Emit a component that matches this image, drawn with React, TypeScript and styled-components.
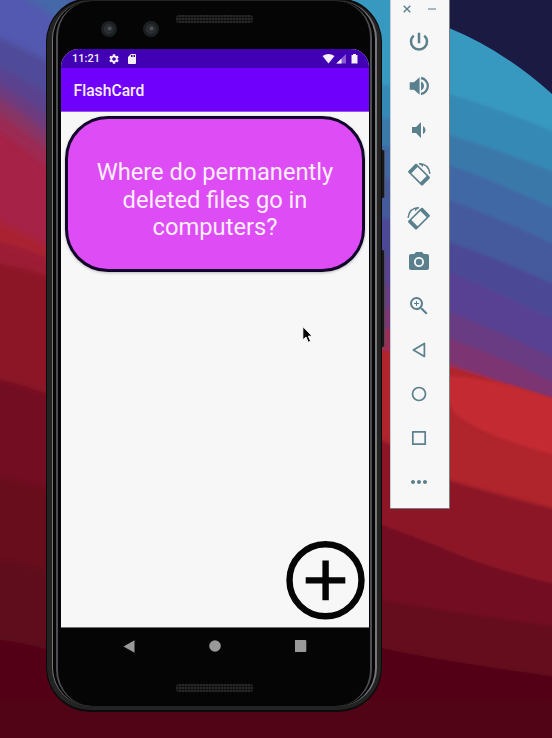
import React from "react";
import styled, { createGlobalStyle } from "styled-components";
import { MdVolumeDown, MdPhotoCamera, MdZoomIn, MdMoreHoriz, MdSettings, MdSdCard } from "react-icons/md";

const GlobalStyle = createGlobalStyle`
  *, *::before, *::after { box-sizing: border-box; }
  body { margin: 0; overflow: hidden; font-family: Roboto, sans-serif; }
  svg { display: block; }
`;

const Desktop = styled.main`
  position: relative;
  display: flex;
  align-items: flex-start;
  width: 552px;
  height: 738px;
  padding-left: 46px;
  overflow: hidden;
  background: #520417;
`;

const WallpaperArt = styled.svg`
  position: absolute;
  inset: 0;
`;

const Phone = styled.section`
  position: relative;
  flex: none;
  width: 336px;
  height: 714px;
  margin-top: -2px;
  padding: 1px 4px 4px 5px;
  border: 1px solid #0b0b0b;
  border-width: 2px 1px;
  border-radius: 44px;
  background: #232323;
`;

const Rim = styled.div`
  height: 100%;
  padding: 0 3px;
  border: solid #77777a;
  border-width: 0 2px 0 1px;
  border-radius: 38px;
  background: #050505;
`;

const Glass = styled.div`
  display: flex;
  flex-direction: column;
  height: 100%;
  padding: 0 2px 0 3px;
  border: solid #4d4e52;
  border-width: 0 2px;
  border-radius: 36px;
  background: #050505;
`;

const SideKey = styled.span<{ $top: number; $height: number }>`
  position: absolute;
  right: -4px;
  top: ${(p) => p.$top}px;
  width: 3px;
  height: ${(p) => p.$height}px;
  border-right: 1px solid #4c4c4c;
  border-radius: 0 2px 2px 0;
  background: #171717;
`;

const Forehead = styled.div`
  flex: none;
  display: flex;
  height: 48px;
  padding: 14px 0 0 40px;
`;

const Lens = styled.span`
  width: 16px;
  height: 16px;
  margin: 6px 26px 0 0;
  border: 3px solid #1b2023;
  border-radius: 50%;
  background: radial-gradient(circle at 55% 45%, #50545a 0 1px, #24282b 3px, #303438 5px);

  & + & {
    margin-right: 17px;
  }
`;

const Speaker = styled.span`
  width: 77px;
  height: 8px;
  border-radius: 3px;
  background:
    repeating-linear-gradient(0deg, transparent 0 2px, #101010 2px 3px),
    repeating-linear-gradient(90deg, #272727 0 2px, #171717 2px 3px);
`;

const Screen = styled.div`
  flex: none;
  display: flex;
  flex-direction: column;
  width: 308px;
  height: 579px;
  border-radius: 18px 18px 0 0;
  overflow: hidden;
  border-bottom: 1px solid #707070;
  background: #f7f7f7;
`;

const StatusBar = styled.div`
  flex: none;
  display: flex;
  align-items: center;
  height: 19px;
  padding: 0 10px 0 11px;
  background: #4200b5;
  color: #f5f0fb;
`;

const Clock = styled.span`
  width: 36px;
  font-size: 11px;
  font-weight: 500;
  line-height: 19px;
`;

const Notices = styled.span`
  display: flex;
  flex: 1;
  align-items: center;
  gap: 6px;
`;

const AppBar = styled.header`
  flex: none;
  height: 44px;
  padding-left: 12.5px;
  border-bottom: 1px solid #9a55f0;
  background: #6f00fb;
  color: #f6effe;
  font-size: 15.7px;
  font-weight: 500;
  line-height: 46px;
`;

const Content = styled.div`
  display: flex;
  flex: 1;
  flex-direction: column;
  justify-content: space-between;
  padding: 4px 4px 7px;
`;

const Card = styled.article`
  display: flex;
  align-items: center;
  justify-content: center;
  height: 156px;
  padding: 13px 20px 0;
  border: 3px solid #12032b;
  border-radius: 43px;
  background: #de4cf5;
  box-shadow: 0 1px 3px rgba(0, 0, 0, 0.25);
  color: #fdeeff;
  font-size: 23.7px;
  line-height: 27.5px;
  text-align: center;
`;

const AddButton = styled.button`
  align-self: flex-end;
  width: 79px;
  height: 79px;
  padding: 0;
  border: 0;
  background: none;
`;

const NavBar = styled.nav`
  flex: none;
  display: flex;
  align-items: center;
  gap: 74px;
  height: 36px;
  padding-left: 62px;
`;

const Chin = styled.div`
  display: flex;
  justify-content: center;
  padding-top: 20px;
`;

const Toolbar = styled.aside`
  position: relative;
  flex: none;
  width: 60px;
  height: 509px;
  margin-left: 8px;
  padding-right: 1px;
  border: solid #777c7c;
  border-width: 0 1px 1px 0;
  background: #f7f7f7;
  box-shadow: inset 1px 0 #c5cbd2;
  color: #5a7f8d;
`;

const WindowControls = styled.div`
  display: flex;
  justify-content: space-between;
  height: 20px;
  padding: 5px 12px 0 13px;
`;

const Tools = styled.div`
  display: flex;
  flex-direction: column;
  align-items: center;
`;

const Tool = styled.span`
  display: flex;
  align-items: center;
  height: 44px;
`;

const Pointer = styled.svg`
  position: absolute;
  left: 300px;
  top: 324px;
`;

const leftBands: [string, number, number][] = [
  ["#4f4b9a", 38, 62],
  ["#5a438f", 68, 94],
  ["#6c3a7e", 84, 116],
  ["#863565", 98, 134],
  ["#9b2c52", 114, 150],
  ["#a62347", 132, 168],
  ["#aa2433", 222, 246],
  ["#9d1c36", 242, 258],
  ["#8c1527", 264, 276],
  ["#721020", 380, 394],
  ["#670c1c", 478, 490],
  ["#5e081a", 560, 572],
  ["#520417", 640, 650],
];

const rightBands: [string, number, number, number][] = [
  ["#3689b5", 85, 94, 132],
  ["#3b78aa", 118, 135, 172],
  ["#4068a4", 146, 165, 210],
  ["#455a9d", 178, 200, 246],
  ["#4c4a96", 218, 242, 285],
  ["#594192", 256, 272, 322],
  ["#683b82", 285, 312, 360],
  ["#7c3472", 308, 338, 384],
];

const Wallpaper = () => (
  <WallpaperArt width="552" height="738" viewBox="0 0 552 738">
    <defs>
      <filter id="soft" filterUnits="userSpaceOnUse" x="-40" y="-40" width="640" height="820">
        <feGaussianBlur stdDeviation="3" />
      </filter>
      <filter id="slight" filterUnits="userSpaceOnUse" x="300" y="-20" width="300" height="820">
        <feGaussianBlur stdDeviation="1.5" />
      </filter>
    </defs>
    <rect width="220" height="738" fill="#5359b0" />
    <g filter="url(#soft)">
      <path d="M10 -10Q42 6 70 30V-10Z" fill="#4467a8" />
      {leftBands.map(([fill, a, b]) => (
        <path key={fill} d={`M-30 ${a - 3}L0 ${a}Q25 ${(a + b) / 2 - 2} 48 ${b}L240 ${b + 20}V770H-30Z`} fill={fill} />
      ))}
    </g>
    <rect x="220" width="332" height="738" fill="#1a1a43" />
    <path d="M200 -5L382 -5Q420 12 449 28Q503 50 552 94V738H200Z" fill="#3899c0" />
    <g filter="url(#slight)">
      {rightBands.map(([fill, a, b, c]) => (
        <path key={fill} d={`M200 ${a - 8}L382 ${a}Q420 ${a + 3} 449 ${b}Q505 ${(b + c) / 2 - 3} 580 ${c + 11}V770H200Z`} fill={fill} />
      ))}
    </g>
    <path d="M200 320L382 328Q420 336 449 363L552 398V738H200Z" fill="#9c2d56" />
    <path d="M200 340L382 350Q420 358 449 367L552 399V738H200Z" fill="#b0242c" />
    <g filter="url(#slight)">
      <path d="M449 376Q500 378 580 408V461Q480 438 453 411Q446 398 449 376Z" fill="#c42c30" />
      <path d="M200 435L382 440Q420 455 449 480Q490 493 580 515V770H200Z" fill="#8c1527" />
      <path d="M200 515L382 525Q410 535 440 547Q490 570 580 590V770H200Z" fill="#721020" />
      <path d="M200 580L382 600Q440 611 580 630V770H200Z" fill="#650c1c" />
      <path d="M200 630L382 648Q440 661 580 680V770H200Z" fill="#520417" />
    </g>
    <path d="M0 700H552V738H0Z" fill="#520417" />
  </WallpaperArt>
);

const PowerIcon = () => (
  <svg width="24" height="24" viewBox="0 0 24 24" fill="none" stroke="currentColor" strokeWidth="2.5">
    <path d="M12 2.7V13.2M6.7 5.6A8 8 0 1 0 17.3 5.6" />
  </svg>
);

const VolumeUpIcon = () => (
  <svg width="24" height="24" viewBox="0 0 24 24">
    <path d="M2.7 8.2H7L12.6 3.3V20.7L7 15.8H2.7Z" fill="currentColor" />
    <path d="M14 7.6C18 9 18 15 14 16.4Z" fill="currentColor" />
    <path d="M14 4A8.1 8.1 0 0 1 14 20" fill="none" stroke="currentColor" strokeWidth="2.3" />
  </svg>
);

const RotateIcon = ({ mirrored = false }: { mirrored?: boolean }) => (
  <svg width="24" height="24" viewBox="0 0 24 24" overflow="visible">
    <g transform={mirrored ? "matrix(-1 0 0 1 24 0)" : undefined}>
      <path
        transform="translate(12 12.7) rotate(45)"
        fill="currentColor"
        fillRule="evenodd"
        d="M-9 -6H9Q10.2 -6 10.2 -4.8V4.8Q10.2 6 9 6H-9Q-10.2 6 -10.2 4.8V-4.8Q-10.2 -6 -9 -6ZM-6.4 -4.4V4.4H6.4V-4.4Z"
      />
      <path d="M12 1.7Q21.8 1.7 22.9 11.8" fill="none" stroke="currentColor" strokeWidth="1.5" />
      <path d="M11.6 1.1L16 1.9V5.3Z" fill="currentColor" />
    </g>
  </svg>
);

const Outline = ({ d }: { d: string }) => (
  <svg width="24" height="24" viewBox="0 0 24 24">
    <path d={d} fill="none" stroke="currentColor" strokeWidth="1.7" strokeLinejoin="round" />
  </svg>
);

const tools: React.ReactNode[] = [
  <PowerIcon />,
  <VolumeUpIcon />,
  <MdVolumeDown size={24} />,
  <RotateIcon />,
  <RotateIcon mirrored />,
  <MdPhotoCamera size={24} />,
  <MdZoomIn size={24} />,
  <Outline d="M6.4 12L17.4 5.5V18.5Z" />,
  <Outline d="M5.5 12A6.5 6.5 0 1 0 18.5 12A6.5 6.5 0 1 0 5.5 12Z" />,
  <Outline d="M5.8 5.8H18.2V18.2H5.8Z" />,
  <MdMoreHoriz size={24} />,
];

export default function App() {
  return (
    <>
      <GlobalStyle />
      <Desktop>
        <Wallpaper />
        <Phone>
          <SideKey $top={150} $height={48} />
          <SideKey $top={250} $height={97} />
          <Rim>
            <Glass>
              <Forehead>
                <Lens />
                <Lens />
                <Speaker />
              </Forehead>
              <Screen>
                <StatusBar>
                  <Clock>11:21</Clock>
                  <Notices>
                    <MdSettings size={12} />
                    <MdSdCard size={12} />
                  </Notices>
                  <svg width="37" height="12" viewBox="0 0 37 12">
                    <path d="M.5 3Q6.5 -1 12.5 3L6.5 10.5Z" fill="currentColor" />
                    <path d="M24 1V10.5H14.3Z" fill="#8a5bd2" />
                    <path d="M19.5 5.5V10.5H14.3Z" fill="currentColor" />
                    <path d="M31 1H34V2H35.5V10.5H29.5V2H31Z" fill="currentColor" />
                  </svg>
                </StatusBar>
                <AppBar>FlashCard</AppBar>
                <Content>
                  <Card>Where do permanently deleted files go in computers?</Card>
                  <AddButton aria-label="Add card">
                    <svg width="79" height="79" viewBox="0 0 79 79">
                      <circle cx="39.5" cy="39.3" r="36" fill="none" stroke="#050505" strokeWidth="6.4" />
                      <path d="M19.7 39.4H59.3M39.6 19.4V59.2" stroke="#050505" strokeWidth="6.4" />
                    </svg>
                  </AddButton>
                </Content>
              </Screen>
              <NavBar>
                <svg width="12" height="13" viewBox="0 0 12 13">
                  <path d="M0.5 6.5L11.5 0.3V12.7Z" fill="#999" />
                </svg>
                <svg width="12" height="12" viewBox="0 0 12 12">
                  <circle cx="6" cy="6" r="5.8" fill="#999" />
                </svg>
                <svg width="12" height="12" viewBox="0 0 12 12">
                  <rect x="-1" width="12.3" height="12" rx="1" fill="#999" />
                </svg>
              </NavBar>
              <Chin>
                <Speaker />
              </Chin>
            </Glass>
          </Rim>
        </Phone>
        <Toolbar>
          <WindowControls>
            <svg width="8" height="8" viewBox="0 0 8 8">
              <path d="M.7 .7L7.3 7.3M7.3 .7L.7 7.3" stroke="currentColor" strokeWidth="1.4" />
            </svg>
            <svg width="8" height="8" viewBox="0 0 8 8">
              <path d="M0 4H8" stroke="#91a8b1" strokeWidth="1.6" />
            </svg>
          </WindowControls>
          <Tools>
            {tools.map((icon, i) => (
              <Tool key={i}>{icon}</Tool>
            ))}
          </Tools>
        </Toolbar>
        <Pointer width="14" height="22" viewBox="0 0 14 22">
          <path
            d="M2.8 2.5V16L6 13L8.2 18.3L10.7 17.2L8.4 12.2H12.3Z"
            fill="#080808"
            stroke="#fff"
            strokeWidth="1"
          />
        </Pointer>
      </Desktop>
    </>
  );
}
